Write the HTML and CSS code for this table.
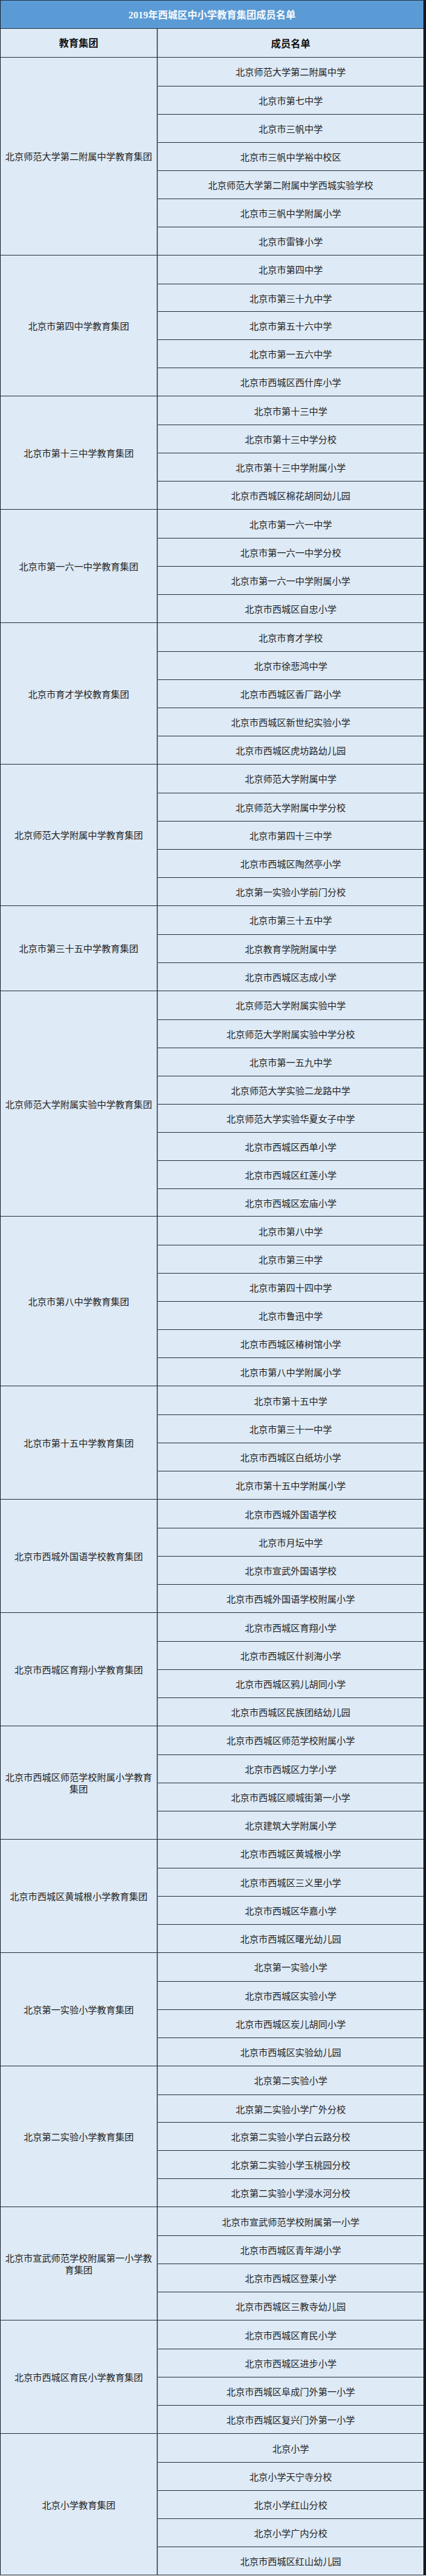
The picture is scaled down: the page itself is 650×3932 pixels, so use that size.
FILE: index.html
```html
<!DOCTYPE html>
<html lang="zh-CN">
<head>
<meta charset="utf-8">
<title>2019年西城区中小学教育集团成员名单</title>
<link rel="stylesheet" href="styles.css">
</head>
<body>
<div class="sheet">
  <div class="title">2019年西城区中小学教育集团成员名单</div>
  <div class="row head">
    <div class="name">教育集团</div>
    <div class="members"><div class="member">成员名单</div></div>
  </div>

  <div class="row">
    <div class="name">北京师范大学第二附属中学教育集团</div>
    <div class="members">
      <div class="member">北京师范大学第二附属中学</div>
      <div class="member">北京市第七中学</div>
      <div class="member">北京市三帆中学</div>
      <div class="member">北京市三帆中学裕中校区</div>
      <div class="member">北京师范大学第二附属中学西城实验学校</div>
      <div class="member">北京市三帆中学附属小学</div>
      <div class="member">北京市雷锋小学</div>
    </div>
  </div>

  <div class="row">
    <div class="name">北京市第四中学教育集团</div>
    <div class="members">
      <div class="member">北京市第四中学</div>
      <div class="member">北京市第三十九中学</div>
      <div class="member">北京市第五十六中学</div>
      <div class="member">北京市第一五六中学</div>
      <div class="member">北京市西城区西什库小学</div>
    </div>
  </div>

  <div class="row">
    <div class="name">北京市第十三中学教育集团</div>
    <div class="members">
      <div class="member">北京市第十三中学</div>
      <div class="member">北京市第十三中学分校</div>
      <div class="member">北京市第十三中学附属小学</div>
      <div class="member">北京市西城区棉花胡同幼儿园</div>
    </div>
  </div>

  <div class="row">
    <div class="name">北京市第一六一中学教育集团</div>
    <div class="members">
      <div class="member">北京市第一六一中学</div>
      <div class="member">北京市第一六一中学分校</div>
      <div class="member">北京市第一六一中学附属小学</div>
      <div class="member">北京市西城区自忠小学</div>
    </div>
  </div>

  <div class="row">
    <div class="name">北京市育才学校教育集团</div>
    <div class="members">
      <div class="member">北京市育才学校</div>
      <div class="member">北京市徐悲鸿中学</div>
      <div class="member">北京市西城区香厂路小学</div>
      <div class="member">北京市西城区新世纪实验小学</div>
      <div class="member">北京市西城区虎坊路幼儿园</div>
    </div>
  </div>

  <div class="row">
    <div class="name">北京师范大学附属中学教育集团</div>
    <div class="members">
      <div class="member">北京师范大学附属中学</div>
      <div class="member">北京师范大学附属中学分校</div>
      <div class="member">北京市第四十三中学</div>
      <div class="member">北京市西城区陶然亭小学</div>
      <div class="member">北京第一实验小学前门分校</div>
    </div>
  </div>

  <div class="row">
    <div class="name">北京市第三十五中学教育集团</div>
    <div class="members">
      <div class="member">北京市第三十五中学</div>
      <div class="member">北京教育学院附属中学</div>
      <div class="member">北京市西城区志成小学</div>
    </div>
  </div>

  <div class="row">
    <div class="name">北京师范大学附属实验中学教育集团</div>
    <div class="members">
      <div class="member">北京师范大学附属实验中学</div>
      <div class="member">北京师范大学附属实验中学分校</div>
      <div class="member">北京市第一五九中学</div>
      <div class="member">北京师范大学实验二龙路中学</div>
      <div class="member">北京师范大学实验华夏女子中学</div>
      <div class="member">北京市西城区西单小学</div>
      <div class="member">北京市西城区红莲小学</div>
      <div class="member">北京市西城区宏庙小学</div>
    </div>
  </div>

  <div class="row">
    <div class="name">北京市第八中学教育集团</div>
    <div class="members">
      <div class="member">北京市第八中学</div>
      <div class="member">北京市第三中学</div>
      <div class="member">北京市第四十四中学</div>
      <div class="member">北京市鲁迅中学</div>
      <div class="member">北京市西城区椿树馆小学</div>
      <div class="member">北京市第八中学附属小学</div>
    </div>
  </div>

  <div class="row">
    <div class="name">北京市第十五中学教育集团</div>
    <div class="members">
      <div class="member">北京市第十五中学</div>
      <div class="member">北京市第三十一中学</div>
      <div class="member">北京市西城区白纸坊小学</div>
      <div class="member">北京市第十五中学附属小学</div>
    </div>
  </div>

  <div class="row">
    <div class="name">北京市西城外国语学校教育集团</div>
    <div class="members">
      <div class="member">北京市西城外国语学校</div>
      <div class="member">北京市月坛中学</div>
      <div class="member">北京市宣武外国语学校</div>
      <div class="member">北京市西城外国语学校附属小学</div>
    </div>
  </div>

  <div class="row">
    <div class="name">北京市西城区育翔小学教育集团</div>
    <div class="members">
      <div class="member">北京市西城区育翔小学</div>
      <div class="member">北京市西城区什刹海小学</div>
      <div class="member">北京市西城区鸦儿胡同小学</div>
      <div class="member">北京市西城区民族团结幼儿园</div>
    </div>
  </div>

  <div class="row">
    <div class="name">北京市西城区师范学校附属小学教育集团</div>
    <div class="members">
      <div class="member">北京市西城区师范学校附属小学</div>
      <div class="member">北京市西城区力学小学</div>
      <div class="member">北京市西城区顺城街第一小学</div>
      <div class="member">北京建筑大学附属小学</div>
    </div>
  </div>

  <div class="row">
    <div class="name">北京市西城区黄城根小学教育集团</div>
    <div class="members">
      <div class="member">北京市西城区黄城根小学</div>
      <div class="member">北京市西城区三义里小学</div>
      <div class="member">北京市西城区华嘉小学</div>
      <div class="member">北京市西城区曙光幼儿园</div>
    </div>
  </div>

  <div class="row">
    <div class="name">北京第一实验小学教育集团</div>
    <div class="members">
      <div class="member">北京第一实验小学</div>
      <div class="member">北京市西城区实验小学</div>
      <div class="member">北京市西城区炭儿胡同小学</div>
      <div class="member">北京市西城区实验幼儿园</div>
    </div>
  </div>

  <div class="row">
    <div class="name">北京第二实验小学教育集团</div>
    <div class="members">
      <div class="member">北京第二实验小学</div>
      <div class="member">北京第二实验小学广外分校</div>
      <div class="member">北京第二实验小学白云路分校</div>
      <div class="member">北京第二实验小学玉桃园分校</div>
      <div class="member">北京第二实验小学浸水河分校</div>
    </div>
  </div>

  <div class="row">
    <div class="name">北京市宣武师范学校附属第一小学教育集团</div>
    <div class="members">
      <div class="member">北京市宣武师范学校附属第一小学</div>
      <div class="member">北京市西城区青年湖小学</div>
      <div class="member">北京市西城区登莱小学</div>
      <div class="member">北京市西城区三教寺幼儿园</div>
    </div>
  </div>

  <div class="row">
    <div class="name">北京市西城区育民小学教育集团</div>
    <div class="members">
      <div class="member">北京市西城区育民小学</div>
      <div class="member">北京市西城区进步小学</div>
      <div class="member">北京市西城区阜成门外第一小学</div>
      <div class="member">北京市西城区复兴门外第一小学</div>
    </div>
  </div>

  <div class="row">
    <div class="name">北京小学教育集团</div>
    <div class="members">
      <div class="member">北京小学</div>
      <div class="member">北京小学天宁寺分校</div>
      <div class="member">北京小学红山分校</div>
      <div class="member">北京小学广内分校</div>
      <div class="member">北京市西城区红山幼儿园</div>
    </div>
  </div>
</div>
</body>
</html>
```

FILE: styles.css
```css
html, body {
  margin: 0;
  padding: 0;
  background: #ffffff;
}

.sheet {
  width: 650px;
  box-sizing: border-box;
  border-top: 1px solid #2a3a4c;
  border-bottom: 1px solid #1e2833;
  border-left: 1px solid #1e2833;
  border-right: 4px solid #141a21;
  font-family: "Noto Sans CJK SC", "Liberation Sans", sans-serif;
  color: #222222;
  background: #deeaf6;
}

.title {
  height: 41.8px;
  background: #5b9bd5;
  color: #f7fafd;
  font-family: "Liberation Serif", "Noto Sans CJK SC", serif;
  font-size: 15px;
  font-weight: bold;
  display: flex;
  align-items: center;
  justify-content: center;
}

.row {
  display: flex;
  border-top: 1px solid #2b3744;
  background: #deeaf6;
}

.name {
  flex: 0 0 240px;
  box-sizing: border-box;
  border-right: 2px solid #5e6c7a;
  padding: 0 6px;
  display: flex;
  align-items: center;
  justify-content: center;
  text-align: center;
  font-size: 14px;
  line-height: 18px;
}

.members {
  flex: 1;
  display: flex;
  flex-direction: column;
}

.member {
  height: 42.98px;
  box-sizing: border-box;
  display: flex;
  align-items: center;
  justify-content: center;
  font-size: 14px;
  white-space: nowrap;
}

.member + .member {
  border-top: 1px solid #2b3744;
}

.head .name,
.head .member {
  font-size: 15px;
  font-weight: bold;
  color: #111111;
}
```
